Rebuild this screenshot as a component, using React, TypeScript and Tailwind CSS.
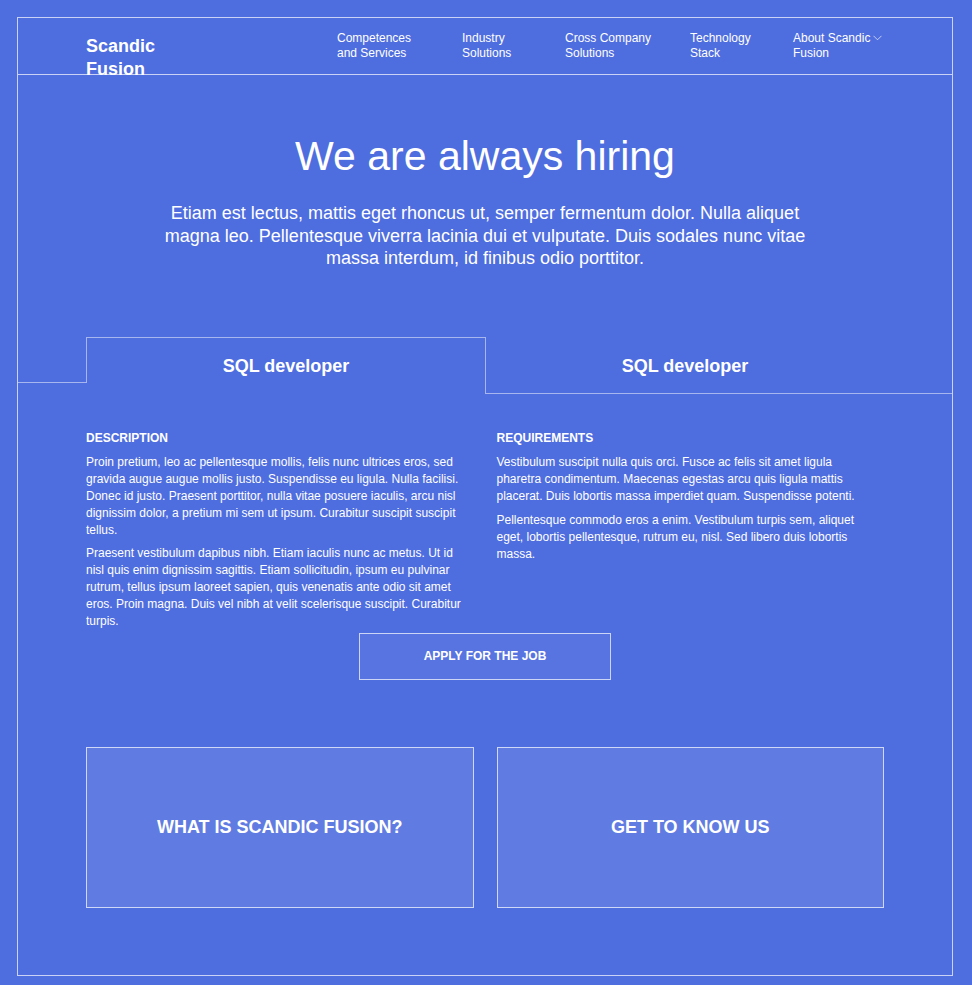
import React from 'react';

const NAV = [
  { lines: ['Competences', 'and Services'], w: 'w-[125px]' },
  { lines: ['Industry', 'Solutions'], w: 'w-[103px]' },
  { lines: ['Cross Company', 'Solutions'], w: 'w-[125px]' },
  { lines: ['Technology', 'Stack'], w: 'w-[103px]' },
];

function Chevron() {
  return (
    <svg width="9" height="6" viewBox="0 0 9 6" className="inline-block ml-[3px] -mt-[2px] align-middle" fill="none">
      <polyline points="0.5,0.8 4.5,4.8 8.5,0.8" stroke="rgba(255,255,255,0.75)" strokeWidth="0.9" />
    </svg>
  );
}

export default function App() {
  return (
    <div className="min-h-screen bg-[#4e6ddf] pt-[17px] pl-[17px] text-white font-['Liberation_Sans',Arial,sans-serif]">
      <div className="w-[936px] h-[959px] border border-white/70">
        {/* Header */}
        <header className="h-[57px] border-b border-white/70 flex pl-[68px]">
          <div className="w-[251px] pt-[17px] text-[18px] leading-[23px] font-bold">
            Scandic
            <br />
            Fusion
          </div>
          {NAV.map((item) => (
            <div key={item.lines[0]} className={`${item.w} pt-[13px] text-[12px] leading-[15px]`}>
              {item.lines[0]}
              <br />
              {item.lines[1]}
            </div>
          ))}
          <div className="pt-[13px] text-[12px] leading-[15px]">
            About Scandic
            <Chevron />
            <br />
            Fusion
          </div>
        </header>

        {/* Hero */}
        <section className="pt-[57px] text-center">
          <h1 className="text-[41px] leading-[49px] font-normal">We are always hiring</h1>
          <p className="mt-[21px] mx-auto max-w-[662px] text-[18px] leading-[22.5px]">
            Etiam est lectus, mattis eget rhoncus ut, semper fermentum dolor. Nulla aliquet magna leo. Pellentesque
            viverra lacinia dui et vulputate. Duis sodales nunc vitae massa interdum, id finibus odio porttitor.
          </p>
        </section>

        {/* Tabs */}
        <div className="mt-[67px] flex items-start">
          <div className="w-[68px] h-[46px] border-b border-white/50" />
          <div className="w-[399px] h-[46px] border-t border-l border-white/50 pt-[16px] text-center text-[18px] leading-[24px] font-bold">
            SQL developer
          </div>
          <div className="w-[399px] h-[57px] border-l border-b border-white/50 pt-[17px] text-center text-[18px] leading-[24px] font-bold">
            SQL developer
          </div>
          <div className="flex-1 h-[57px] border-b border-white/50" />
        </div>

        {/* Job details */}
        <section className="px-[68px] pt-[36px]">
          <div className="grid grid-cols-2 gap-x-[23px] text-[12px] leading-[17px]">
            <div>
              <h3 className="font-bold uppercase">Description</h3>
              <p className="mt-[7px]">
                Proin pretium, leo ac pellentesque mollis, felis nunc ultrices eros, sed gravida augue augue mollis
                justo. Suspendisse eu ligula. Nulla facilisi. Donec id justo. Praesent porttitor, nulla vitae posuere
                iaculis, arcu nisl dignissim dolor, a pretium mi sem ut ipsum. Curabitur suscipit suscipit tellus.
              </p>
              <p className="mt-[6px]">
                Praesent vestibulum dapibus nibh. Etiam iaculis nunc ac metus. Ut id nisl quis enim dignissim sagittis.
                Etiam sollicitudin, ipsum eu pulvinar rutrum, tellus ipsum laoreet sapien, quis venenatis ante odio sit
                amet eros. Proin magna. Duis vel nibh at velit scelerisque suscipit. Curabitur turpis.
              </p>
            </div>
            <div className="max-w-[380px]">
              <h3 className="font-bold uppercase">Requirements</h3>
              <p className="mt-[7px]">
                Vestibulum suscipit nulla quis orci. Fusce ac felis sit amet ligula pharetra condimentum. Maecenas
                egestas arcu quis ligula mattis placerat. Duis lobortis massa imperdiet quam. Suspendisse potenti.
              </p>
              <p className="mt-[7px]">
                Pellentesque commodo eros a enim. Vestibulum turpis sem, aliquet eget, lobortis pellentesque, rutrum eu,
                nisl. Sed libero duis lobortis massa.
              </p>
            </div>
          </div>

          <button className="mt-[3px] mx-auto w-[252px] h-[47px] border border-white/70 bg-white/5 flex items-center justify-center text-[12px] font-bold uppercase">
            Apply for the job
          </button>

          {/* Cards */}
          <div className="mt-[67px] grid grid-cols-2 gap-[23px]">
            <div className="h-[161px] border border-white/70 bg-white/10 flex items-center justify-center text-[18px] font-bold uppercase">
              What is Scandic Fusion?
            </div>
            <div className="h-[161px] border border-white/70 bg-white/10 flex items-center justify-center text-[18px] font-bold uppercase">
              Get to know us
            </div>
          </div>
        </section>
      </div>
    </div>
  );
}
